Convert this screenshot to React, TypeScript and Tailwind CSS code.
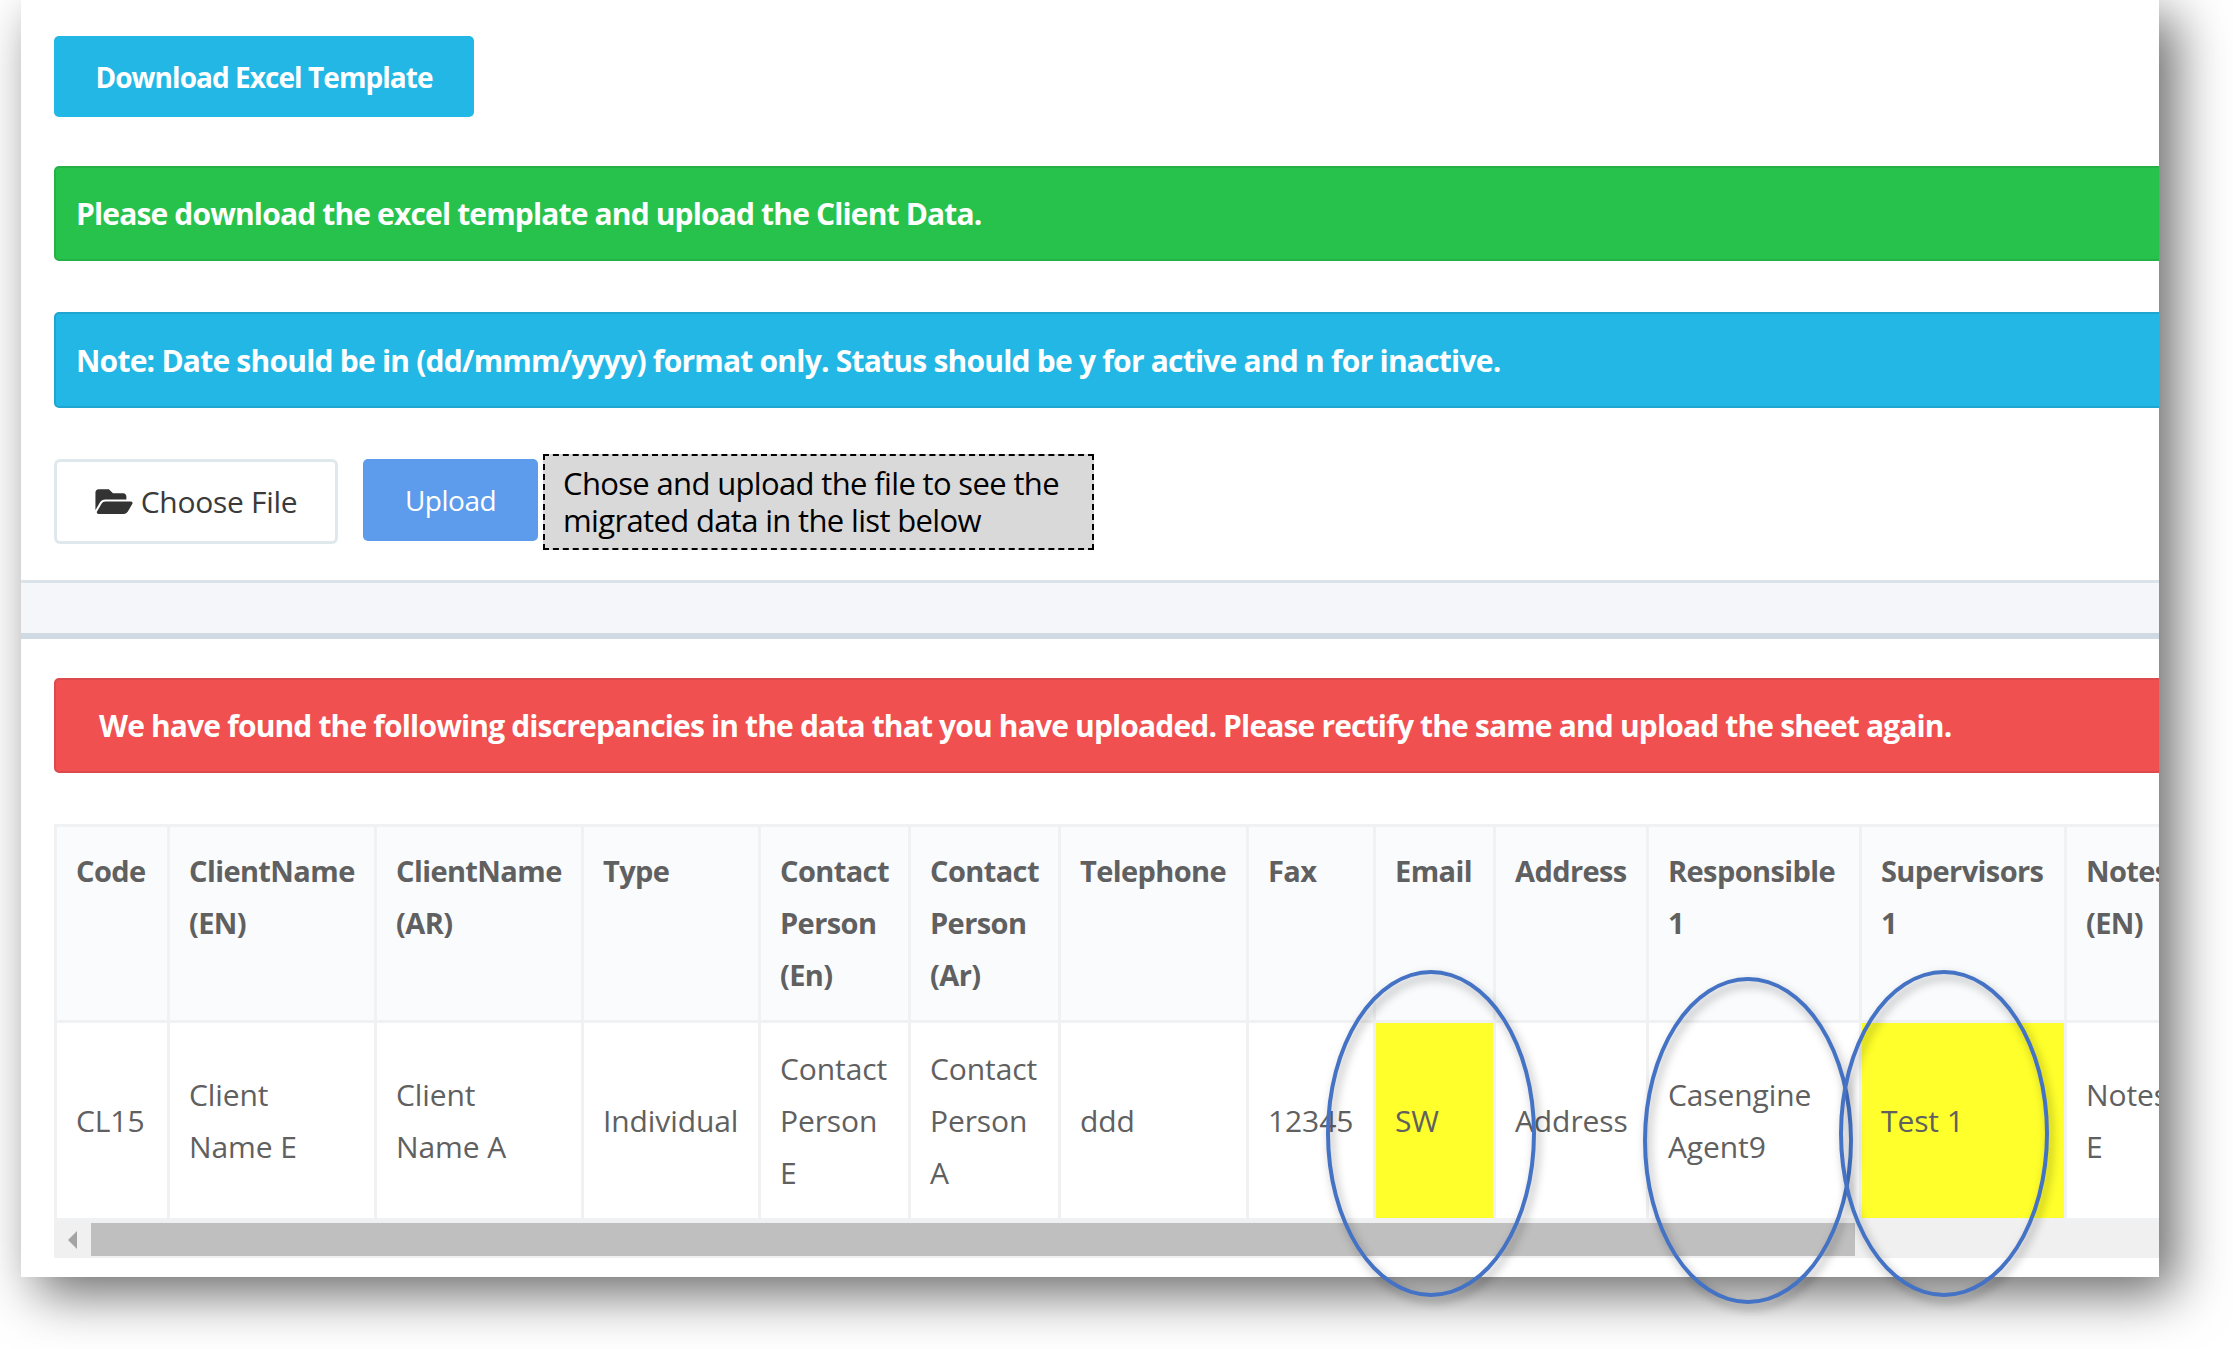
import { FaFolderOpen } from 'react-icons/fa';

const headers = [
  { w: 'w-[113px]', label: 'Code' },
  { w: 'w-[207px]', label: 'ClientName (EN)' },
  { w: 'w-[207px]', label: 'ClientName (AR)' },
  { w: 'w-[177px]', label: 'Type' },
  { w: 'w-[150px]', label: 'Contact Person (En)' },
  { w: 'w-[150px]', label: 'Contact Person (Ar)' },
  { w: 'w-[188px]', label: 'Telephone' },
  { w: 'w-[127px]', label: 'Fax' },
  { w: 'w-[120px]', label: 'Email' },
  { w: 'w-[153px]', label: 'Address' },
  { w: 'w-[213px]', label: 'Responsible 1' },
  { w: 'w-[205px]', label: 'Supervisors 1' },
  { w: 'w-[140px]', label: 'Notes (EN)' },
];

const cells = [
  { text: 'CL15' },
  { text: 'Client Name E' },
  { text: 'Client Name A' },
  { text: 'Individual' },
  { text: 'Contact Person E' },
  { text: 'Contact Person A' },
  { text: 'ddd' },
  { text: '12345' },
  { text: 'SW', hl: true },
  { text: 'Address' },
  { text: 'Casengine Agent9' },
  { text: 'Test 1', hl: true },
  { text: 'Notes E' },
];

function Circle({ className }: { className: string }) {
  return <div className={`absolute w-[210px] h-[327px] rounded-[50%] border-[4px] border-[#4472c4] drop-shadow-[3px_5px_5px_rgba(0,0,0,0.35)] ${className}`} />;
}

export default function App() {
  return (
    <div className="min-h-[1349px] bg-white pl-[21px] font-['Open_Sans',sans-serif] overflow-hidden">
      <div className="relative w-[2138px] h-[1277px] shadow-[16px_16px_50px_rgba(0,0,0,0.6)]">
        <div className="h-full bg-white overflow-hidden">
          <div className="h-[580px] pl-[33px] pt-[36px]">
            <button className="w-[420px] h-[81px] bg-[#23b7e5] rounded-[5px] text-white text-[28px] font-bold tracking-[-0.95px]">Download Excel Template</button>
            <div className="mt-[49px] w-[2200px] h-[95px] flex items-center pl-[20px] bg-[#27c24c] border-2 border-[#24b145] rounded-[5px] text-white text-[30px] font-bold tracking-[-0.85px]">Please download the excel template and upload the Client Data.</div>
            <div className="mt-[51px] w-[2200px] h-[96px] flex items-center pl-[20px] bg-[#23b7e5] border-2 border-[#1fa6d0] rounded-[5px] text-white text-[30px] font-bold tracking-[-0.78px]">Note: Date should be in (dd/mmm/yyyy) format only. Status should be y for active and n for inactive.</div>
            <div className="mt-[46px] flex items-start">
              <button className="mt-[5px] w-[284px] h-[85px] flex items-center justify-center gap-[8px] bg-white border-[3px] border-[#dfe8ec] rounded-[6px] text-[#3a3a3a] text-[30px] tracking-[-0.3px]">
                <FaFolderOpen className="w-[38px] h-[33px] text-[#333333]" />
                Choose File
              </button>
              <button className="ml-[25px] mt-[5px] w-[175px] h-[82px] bg-[#5d9cec] rounded-[5px] text-white text-[28px] tracking-[-0.5px]">Upload</button>
              <div className="ml-[5px] w-[551px] h-[96px] pl-[18px] pt-[9px] bg-[#d9d9d9] border-2 border-dashed border-black text-black text-[31px] leading-[37px] tracking-[-0.65px]">
                Chose and upload the file to see the<br />migrated data in the list below
              </div>
            </div>
          </div>
          <div className="h-[59px] bg-[#f4f6f9] border-t-[3px] border-b-[6px] border-t-[#dbe3e9] border-b-[#d0dae2]" />
          <div className="pl-[33px] pt-[39px]">
            <div className="w-[2200px] h-[95px] flex items-center pl-[43px] bg-[#f05050] border-2 border-[#dd4a4d] rounded-[5px] text-white text-[30px] font-bold tracking-[-0.85px]">We have found the following discrepancies in the data that you have uploaded. Please rectify the same and upload the sheet again.</div>
            <div className="mt-[51px] w-[2105px] overflow-hidden">
              <table className="table-fixed border-collapse w-[2150px] text-[30px] leading-[52px] tracking-[-0.1px] text-[#606060]">
                <thead>
                  <tr className="h-[196px] bg-[#fafbfd]">
                    {headers.map((h) => (
                      <th key={h.label} className={`${h.w} align-top text-left font-bold text-[29px] tracking-[-0.6px] pl-[19px] pr-[15px] pt-[18px] border-[3px] border-[#eff1f3]`}>{h.label}</th>
                    ))}
                  </tr>
                </thead>
                <tbody>
                  <tr className="h-[198px]">
                    {cells.map((c) => (
                      <td key={c.text} className={`align-middle pl-[19px] pr-[15px] border-[3px] border-[#eff1f3] ${c.hl ? 'bg-[#ffff2b]' : 'bg-white'}`}>{c.text}</td>
                    ))}
                  </tr>
                </tbody>
              </table>
              <div className="h-[37px] flex bg-[#f0f0f0] pt-[2px]">
                <div className="w-[37px] h-[34px] flex items-center justify-center">
                  <div className="w-0 h-0 border-y-[9px] border-y-transparent border-r-[9px] border-r-[#a3a3a3]" />
                </div>
                <div className="w-[1764px] h-[33px] bg-[#bfbfbf]" />
              </div>
            </div>
          </div>
        </div>
        <Circle className="left-[1305px] top-[970px]" />
        <Circle className="left-[1622px] top-[977px]" />
        <Circle className="left-[1818px] top-[970px]" />
      </div>
    </div>
  );
}
